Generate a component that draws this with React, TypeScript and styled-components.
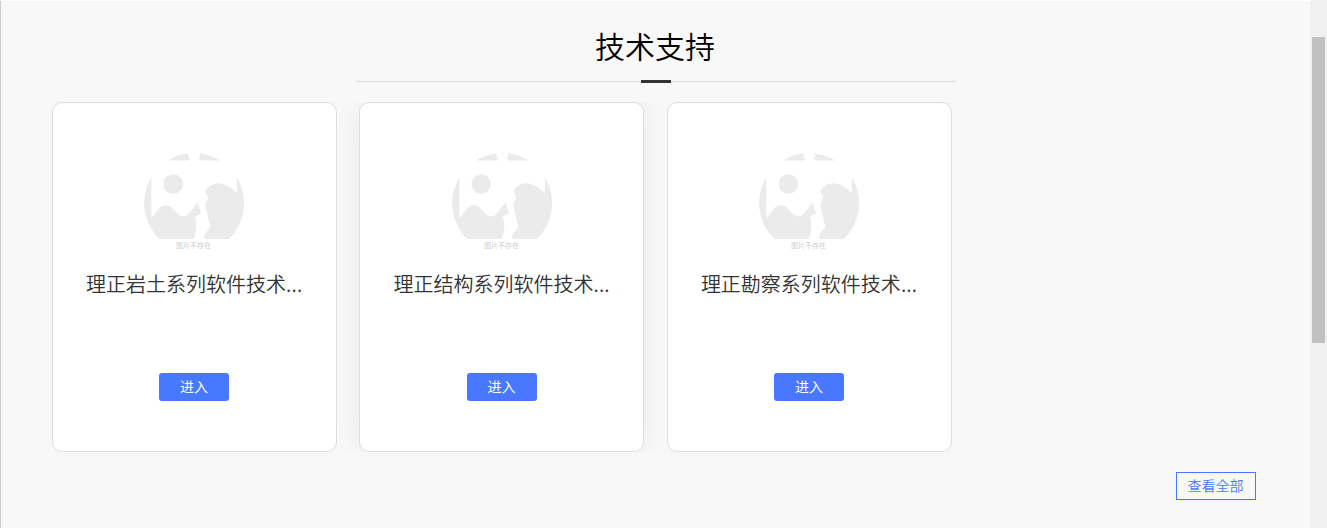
import React from 'react';
import styled, { createGlobalStyle } from 'styled-components';

const GlobalStyle = createGlobalStyle`
  * { box-sizing: border-box; }
  body {
    margin: 0;
    overflow: hidden;
    font-family: "Open Sans", "Noto Sans CJK SC", sans-serif;
    font-weight: 350;
  }
`;

const Page = styled.div`
  display: flex;
  width: 1327px;
  height: 528px;
  background: #fff;
`;

const Section = styled.section`
  flex: 1;
  margin-top: 1px;
  border-left: 1px solid #ccc;
  padding: 21px 54px 0 51px;
  display: flex;
  flex-direction: column;
  background: #f8f8f8;
`;

const Heading = styled.h2`
  margin: 0 0 0 2px;
  height: 58px;
  line-height: 50px;
  font-size: 30px;
  font-weight: 350;
  text-align: center;
  color: #000;
`;

const Divider = styled.div`
  width: 600px;
  height: 3px;
  margin-left: 304px;
  display: flex;
  align-items: center;
  &::before, &::after {
    content: '';
    height: 1px;
    flex: 1;
    background: #ddd;
  }
`;

const DividerMark = styled.span`
  width: 30px;
  height: 3px;
  background: #333;
`;

const CardList = styled.ul`
  list-style: none;
  margin: 19px 0 0;
  padding: 0;
  height: 350px;
  width: 900px;
  display: flex;
  gap: 22.45px;
  overflow: hidden;
`;

const CardBox = styled.li<{ $raised?: boolean }>`
  flex: 0 0 285px;
  height: 350px;
  padding-top: 50px;
  display: flex;
  flex-direction: column;
  align-items: center;
  background: #fff;
  border: 1px solid #ddd;
  border-radius: 10px;
  box-shadow: ${(p) => (p.$raised ? '0 0 30px rgba(0, 0, 0, 0.06)' : 'none')};
`;

const Picture = styled.svg`
  width: 100px;
  height: 100px;
  margin-right: 0.8px;
  fill: #ebebeb;
  text {
    fill: #cfcfcf;
    font-size: 7px;
    font-weight: 400;
  }
`;

const CardTitle = styled.h3`
  margin: 15px 0 0;
  width: 217px;
  height: 34px;
  line-height: 34px;
  font-size: 20px;
  font-weight: 350;
  white-space: nowrap;
  color: #333;
`;

const Ellipsis = styled.span`
  font-weight: 400;
  letter-spacing: 0.2px;
`;

const EnterButton = styled.button`
  margin: 71px 0.8px 0 0;
  width: 70px;
  height: 28px;
  padding: 0 0 2px;
  border: 0;
  border-radius: 3px;
  background: #4778ff;
  color: #fff;
  font: 400 14px/26px "Noto Sans CJK SC", sans-serif;
`;

const ViewAll = styled.button`
  align-self: flex-end;
  margin-top: 20px;
  width: 80px;
  height: 28px;
  padding: 0 1px 2px 0;
  border: 1px solid #4778ff;
  background: transparent;
  color: #4778ff;
  font: 350 14px/24px "Noto Sans CJK SC", sans-serif;
`;

const ScrollTrack = styled.div`
  width: 17px;
  padding: 37px 2px 0;
  background: #f0f0f0;
`;

const ScrollThumb = styled.div`
  width: 13px;
  height: 306px;
  background: #c1c1c1;
`;

const MissingPicture = () => (
  <Picture viewBox="0 0 100 100">
    <path d="M24 7.5 Q33 1.5 44.3 0.4 L44.6 4.5 46 6 45.3 7.5Z" />
    <path d="M55 0.2 Q66 1.6 76.5 7.5 L56.5 7.5 54.5 4.8 56.7 2.2Z" />
    <circle cx="29.3" cy="31" r="9.8" />
    <path d="M7.3 24.3 A50 50 0 0 0 15.3 85.9 L49.7 85.9 C51.5 80 52.6 76 52.3 72 L51 63.5 57 60.5 53.7 49.5 44.5 61 Q39.5 66 34 61 L27.5 54.5 Q21.7 49.5 16 54.5 L7.3 65.3Z" />
    <path d="M92.9 24.3 A50 50 0 0 1 85 85.9 L61 85.9 59.7 82.7 66.3 74 61.3 52 64.3 44.5 61.3 38.3 Q66 31 73.7 30.3 Q83 30 92.9 40.3Z" />
    <text x="49.6" y="95.3" textAnchor="middle">图片不存在</text>
  </Picture>
);

const cards = [
  { title: '理正岩土系列软件技术', raised: false },
  { title: '理正结构系列软件技术', raised: true },
  { title: '理正勘察系列软件技术', raised: false },
];

export default function App() {
  return (
    <>
      <GlobalStyle />
      <Page>
        <Section>
          <Heading>技术支持</Heading>
          <Divider><DividerMark /></Divider>
          <CardList>
            {cards.map((card) => (
              <CardBox key={card.title} $raised={card.raised}>
                <MissingPicture />
                <CardTitle>{card.title}<Ellipsis>...</Ellipsis></CardTitle>
                <EnterButton>进入</EnterButton>
              </CardBox>
            ))}
          </CardList>
          <ViewAll>查看全部</ViewAll>
        </Section>
        <ScrollTrack><ScrollThumb /></ScrollTrack>
      </Page>
    </>
  );
}
